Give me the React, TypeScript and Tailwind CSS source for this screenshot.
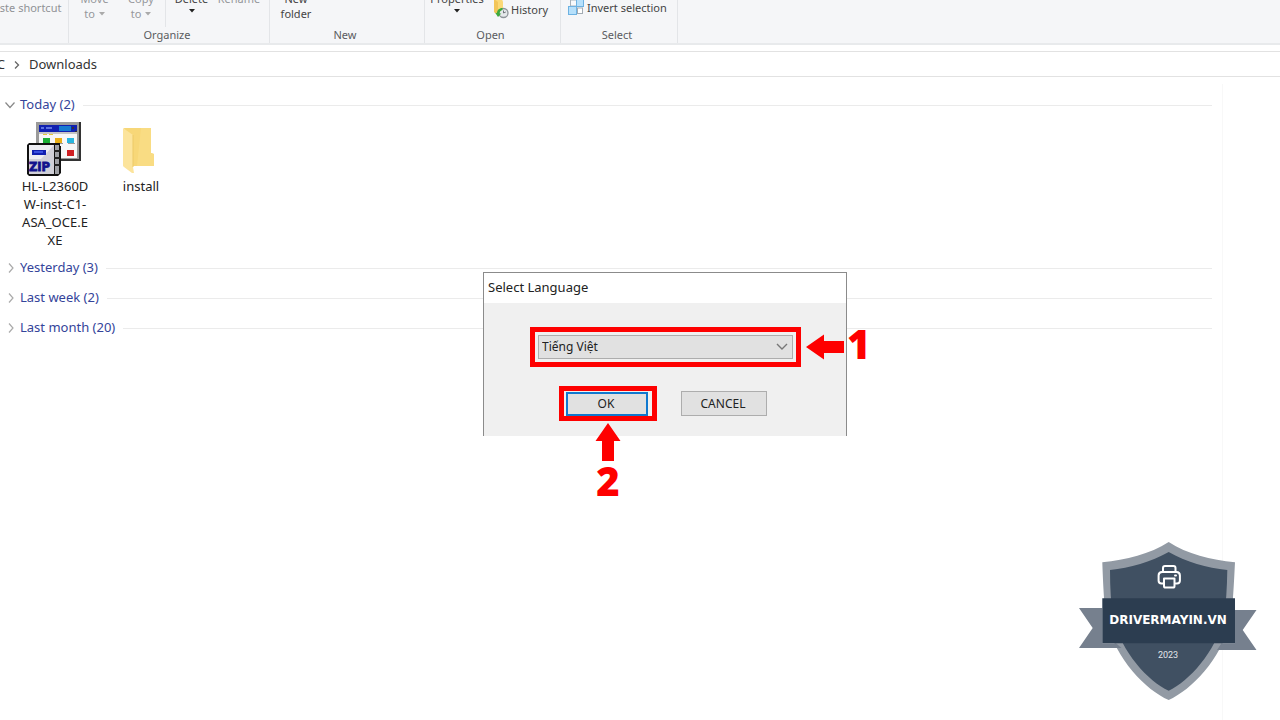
import { useState, type ReactNode } from "react";

function Caret({ className }: { className: string }) {
  return (
    <svg viewBox="0 0 6 4" className={`h-1 w-1.5 ${className}`} aria-hidden="true">
      <path d="M0 0h6L3 3.6z" fill="currentColor" />
    </svg>
  );
}

function RibbonGroup({ label, className, children }: { label: string; className: string; children: ReactNode }) {
  return (
    <section aria-label={label || "Clipboard"} className={`flex shrink-0 flex-col justify-end border-r border-[#e3e5e8] ${className}`}>
      <div className="flex h-6 items-end">{children}</div>
      <div className="h-4 pr-1 text-center leading-4 text-[#5a5c60]">{label}</div>
    </section>
  );
}

function HistoryIcon() {
  return (
    <svg viewBox="0 0 16 20" className="h-5 w-4 shrink-0" aria-hidden="true">
      <path d="M1 0h8l1 3v12H5l-4-2z" fill="#fbd977" />
      <path d="M1 0l4 3v13l-4-3z" fill="#f3c65a" />
      <circle cx="10.500" cy="14" r="4.500" fill="#e4e8ea" stroke="#8d9499" strokeWidth="1.300" />
      <path d="M10.500 11.500V14l2.300-1" fill="none" stroke="#70777c" />
      <path d="M9.500 9C6 9 4 11.500 4 14l-1.800-.2L5 18l3.300-3.400-1.800-.2c0-1.800 1.200-3 3-3.400z" fill="#3eaa3c" />
    </svg>
  );
}

function InvertIcon() {
  return (
    <svg viewBox="0 0 16 16" className="h-4 w-4 shrink-0" aria-hidden="true">
      <rect x="2.500" y="1" width="6" height="6" fill="#f7fafc" stroke="#a8b2ba" />
      <rect x="8.500" y="0.500" width="7" height="7" fill="#b6e0fb" stroke="#6db2e2" />
      <rect x="0.500" y="7.500" width="8" height="8" fill="#b6e0fb" stroke="#6db2e2" />
      <rect x="9.500" y="9" width="5" height="5.500" fill="#fff" stroke="#a2abb3" />
    </svg>
  );
}

function ZipIcon() {
  return (
    <svg viewBox="0 0 56 56" className="h-14 w-14" aria-hidden="true">
      <rect x="9" y="1" width="45" height="39" fill="#333" />
      <rect x="9" y="1" width="43" height="37" fill="#9a9a9a" />
      <rect x="12" y="4" width="38" height="33" fill="#f7f7f7" />
      <rect x="12" y="4" width="38" height="7" fill="#1020b0" />
      <rect x="32" y="5" width="12" height="5" fill="#167ad0" />
      <path d="M14 6h3v2h-3zM19 6h6v2h-6z" fill="#5c72df" />
      <path d="M45 6h2v2h-2zM48 10h2v2h-2z" fill="#333" />
      <rect x="12" y="11" width="38" height="2" fill="#c5c5c5" />
      <path d="M16 13h4v1h-4zM22 13h4v1h-4z" fill="#e4c83b" />
      <rect x="16" y="17" width="7" height="5" fill="#19ae34" />
      <rect x="28" y="17" width="7" height="5" fill="#e9af16" />
      <rect x="40" y="17" width="7" height="5" fill="#27b6df" />
      <path d="M17 22h7v1h-7zM29 22h7v1h-7zM41 22h7v1h-7z" fill="#999" />
      <rect x="28" y="29" width="6" height="6" fill="#1a21a5" />
      <rect x="40" y="29" width="7" height="6" fill="#cf1f22" />
      <path d="M2 22h31v3h1v27l-3 3H2l-2-2V24z" fill="#111" />
      <path d="M2 24h25v29H2z" fill="#d0d0d8" />
      <path d="M2 24h25l-13 14H2z" fill="#ededf2" />
      <rect x="5" y="29" width="14" height="5" fill="#101fb0" />
      <path d="M7 30h9v2H7z" fill="#3a50e0" />
      <rect x="28" y="24" width="4" height="29" fill="#9ea0a5" />
      <path d="M27 29h6v2h-6zM27 36h6v2h-6zM27 43h6v2h-6z" fill="#222" />
      <text x="2" y="50" fontSize="11.500" fontWeight="900" fontFamily="DejaVu Sans, sans-serif" fill="#12128c" stroke="#12128c" strokeWidth=".8">ZIP</text>
    </svg>
  );
}

function FolderIcon() {
  return (
    <svg viewBox="0 0 56 56" className="h-14 w-14" aria-hidden="true">
      <path d="M11 7h27v25l3 1v12H17z" fill="#f7d778" />
      <path d="M28 7h10v25l3 1v12H24z" fill="#f9dc83" />
      <path d="M10 7l10 7v32l1 6-2 0-8-6c-1-1-1-1-1-2z" fill="#fce49c" />
      <path d="M20 14v32" stroke="#edca67" />
    </svg>
  );
}

function GroupHeader({ title, open, onToggle }: { title: string; open: boolean; onToggle: () => void }) {
  return (
    <button type="button" aria-expanded={open} onClick={onToggle} className="flex h-[30px] w-full items-center text-left">
      <svg viewBox="0 0 10 10" className="mr-[5px] ml-[5px] h-2.5 w-2.5 shrink-0" fill="none" stroke={open ? "#888" : "#aaa"} strokeWidth="1.200" aria-hidden="true">
        <path d={open ? "M.5 2.500L5 7.500l4.500-5" : "M4 .5l4 4.500-4 4.500"} />
      </svg>
      <span className="whitespace-nowrap text-[#34449a]">{title}</span>
      <span className="ml-2 h-px flex-1 bg-[#ebebeb]" />
    </button>
  );
}

function FileItem({ name, icon, className }: { name: string[]; icon: ReactNode; className: string }) {
  return (
    <button type="button" className={`flex flex-col items-center self-start leading-[18px] text-[#222] ${className}`}>
      {icon}
      {name.map((line) => (
        <span key={line}>{line}</span>
      ))}
    </button>
  );
}

function LanguageDialog() {
  const [language, setLanguage] = useState("vi");
  return (
    <div role="dialog" aria-labelledby="dialog-title" className="absolute top-[272px] left-[483px] h-[164px] w-[364px] border border-b-0 border-[#8b8b8b] bg-[#f0f0f0]">
      <h2 id="dialog-title" className="h-[30px] bg-white pl-1 text-[13px] leading-7 text-[#222]">Select Language</h2>
      <div className="flex flex-col pt-6 pl-[46px]">
        <div className="flex items-center">
          <div className="relative h-10 w-[271px] shrink-0 border-[5px] border-[#fe0000] p-[3px]">
            <label htmlFor="language" className="sr-only">Language</label>
            <select
              id="language"
              value={language}
              onChange={(e) => setLanguage(e.target.value)}
              className="h-6 w-full appearance-none border border-[#adadad] bg-[#e1e1e1] pl-[3px] text-xs text-[#222]"
            >
              <option value="vi">Tiếng Việt</option>
              <option value="en">English</option>
            </select>
            <svg viewBox="0 0 12 8" className="pointer-events-none absolute top-[11px] right-2 h-2 w-3" fill="none" stroke="#777" strokeWidth="1.400" aria-hidden="true">
              <path d="M1 1l5 5 5-5" />
            </svg>
          </div>
          <svg viewBox="0 0 38 26" className="ml-[5px] h-[26px] w-[38px] shrink-0" aria-hidden="true">
            <path d="M0 13L18 .5V7h20v12H18v6.500z" fill="#fe0000" />
          </svg>
          <span className="ml-[3px] h-10 font-['Open_Sans',sans-serif] text-[40px] leading-[34px] font-extrabold text-[#fe0000]">1</span>
        </div>
        <div className="flex items-start gap-6 pt-[19px] pl-[29px]">
          <div className="flex flex-col items-center">
            <div className="h-[35px] w-[98px] border-[5px] border-[#fe0000] p-px">
              <button type="button" className="ml-px block h-6 w-[82px] border-2 border-[#1078cf] bg-[#e1e1e1] pr-0.5 text-xs leading-5 text-[#222]">OK</button>
            </div>
            <svg viewBox="0 0 26 38" className="mt-0.5 h-[38px] w-[26px]" aria-hidden="true">
              <path d="M13 0l12.500 18H19v20H7V18H.5z" fill="#fe0000" />
            </svg>
            <span className="font-['Open_Sans',sans-serif] text-[40px] leading-10 font-extrabold text-[#fe0000]">2</span>
          </div>
          <button type="button" className="mt-[5px] h-[25px] w-[86px] border border-[#adadad] bg-[#e1e1e1] pr-0.5 text-xs text-[#222]">CANCEL</button>
        </div>
      </div>
    </div>
  );
}

function ShieldLogo() {
  return (
    <div className="absolute right-[23px] bottom-5 h-[158px] w-[178px]">
      <svg viewBox="0 0 178 158" className="h-full w-full" aria-hidden="true">
        <path d="M89.700 0C108 12 132 18 156 20.300C155 40 154 61 152 78C142 118 112 148 89.700 158C67 148 37 118 27 78C25 61 24 40 23.300 20.300C47 18 71 12 89.700 0z" fill="#929aa4" />
        <path d="M89.700 10C107 20 128 26 148.300 28C148 46 147 62 145 76C136 111 110 139 89.700 148.700C69 139 43 111 34 76C32 62 31 46 31 28C51 26 72 20 89.700 10z" fill="#405062" />
        <path d="M0 66H23.300V101.300H37L42.500 106H0L13.700 86z" fill="#76808e" />
        <path d="M177.500 68H156v33.300h-13.500L138 108h39.500L163.700 88z" fill="#76808e" />
        <path d="M23.300 56.300H156v45H23.300z" fill="#2c3d50" />
        <g fill="none" stroke="#fff" strokeWidth="2" strokeLinejoin="round" strokeLinecap="round">
          <path d="M84 30v-4c0-1.500.8-2 2-2h8.500c1.200 0 2 .7 2 2v4" />
          <path d="M84 41.500h-1.500c-1.800 0-2.900-1-2.900-2.700V33.500c0-2 1.300-3.500 3.400-3.500h14.500c2.200 0 3.400 1.500 3.400 3.500v5.300c0 1.700-1.100 2.700-2.900 2.700h-1.500" />
          <path d="M85 36.500h10.500v7.400c0 1-.6 1.600-1.500 1.600h-7.500c-.9 0-1.500-.6-1.500-1.600z" />
          <path d="M96 33.500h1" />
        </g>
      </svg>
      <div className="absolute inset-x-0 top-[70px] text-center font-['DejaVu_Sans',sans-serif] text-xs leading-4 font-bold text-white">DRIVERMAYIN.VN</div>
      <div className="absolute inset-x-0 top-[107px] text-center font-[Roboto,sans-serif] text-[9px] leading-3 text-[#e3e6ea]">2023</div>
    </div>
  );
}

export default function App() {
  const [open, setOpen] = useState(true);
  return (
    <div className="relative flex min-h-screen flex-col overflow-hidden bg-white font-['Noto_Sans','Open_Sans',sans-serif] text-[13px]">
      <header className="flex h-[45px] overflow-hidden border-b-2 border-[#e8eaec] bg-[#f5f6f8] text-[11px] leading-[15px] text-[#444]">
        <RibbonGroup label="" className="w-[69px]">
          <button type="button" className="mb-3 -ml-[13px] whitespace-nowrap text-[#909296]">Paste shortcut</button>
        </RibbonGroup>
        <RibbonGroup label="Organize" className="w-[201px]">
          <div className="flex items-end text-[#96989c]">
            <button type="button" className="mb-1.5 w-[51px]">Move<br /><span className="inline-flex items-center gap-1">to <Caret className="text-[#aaa]" /></span></button>
            <button type="button" className="mb-1.5 ml-px w-10">Copy<br /><span className="inline-flex items-center gap-1">to <Caret className="text-[#aaa]" /></span></button>
            <button type="button" className="ml-1 flex w-[52px] flex-col items-center gap-[3px] border-l border-[#e3e5e8] pb-3.5 text-[#444]">Delete<Caret className="text-[#222]" /></button>
            <button type="button" className="mb-[21px] w-11">Rename</button>
          </div>
        </RibbonGroup>
        <RibbonGroup label="New" className="w-[155px]">
          <button type="button" className="mb-1.5 ml-1.5 w-10">New<br />folder</button>
        </RibbonGroup>
        <RibbonGroup label="Open" className="w-[136px]">
          <button type="button" className="mb-3.5 ml-1 flex w-14 flex-col items-center gap-[3px]">Properties<Caret className="text-[#222]" /></button>
          <button type="button" className="ml-2 flex items-end gap-0.5 pb-2"><HistoryIcon /><span className="pb-0.5">History</span></button>
        </RibbonGroup>
        <RibbonGroup label="Select" className="w-[117px]">
          <button type="button" className="mb-3 ml-[7px] flex items-center gap-[3px] whitespace-nowrap"><InvertIcon />Invert selection</button>
        </RibbonGroup>
      </header>

      <nav aria-label="Address" className="mt-1.5 flex h-[26px] items-center overflow-hidden border-y border-[#e2e2e2] pt-px text-[#333]">
        <a href="#pc" className="-ml-3 w-[17px] text-right">PC</a>
        <svg viewBox="0 0 8 10" className="mx-2 h-2.5 w-2 shrink-0" fill="none" stroke="#666" strokeWidth="1.300" aria-hidden="true">
          <path d="M2 1.500L5.500 5 2 8.500" />
        </svg>
        <a href="#downloads">Downloads</a>
      </nav>

      <div className="mt-[7px] flex flex-1">
        <main className="mr-2.5 min-w-0 flex-1 pt-1.5">
          <GroupHeader title="Today (2)" open={open} onToggle={() => setOpen(!open)} />
          {open && (
            <div className="flex h-[133px] pt-px">
              <FileItem name={["HL-L2360D", "W-inst-C1-", "ASA_OCE.E", "XE"]} icon={<ZipIcon />} className="ml-[15px] w-20" />
              <FileItem name={["install"]} icon={<FolderIcon />} className="ml-1.5 w-20" />
            </div>
          )}
          <GroupHeader title="Yesterday (3)" open={false} onToggle={() => {}} />
          <GroupHeader title="Last week (2)" open={false} onToggle={() => {}} />
          <GroupHeader title="Last month (20)" open={false} onToggle={() => {}} />
        </main>
        <aside aria-label="Preview" className="w-[58px] border-l border-[#f8f8f8]" />
      </div>

      <LanguageDialog />
      <ShieldLogo />
    </div>
  );
}
